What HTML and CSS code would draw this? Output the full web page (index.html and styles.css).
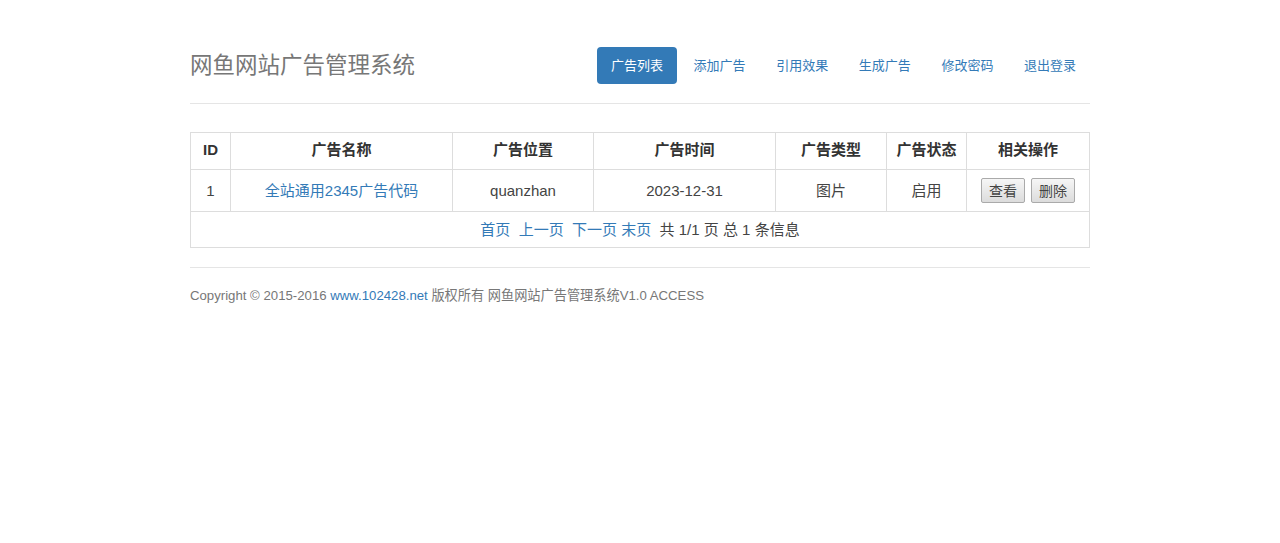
FILE: index.html
```html
<!DOCTYPE HTML>
<html>
<head>
    <meta charset="utf-8">
    <title>网鱼网站广告管理系统</title>
    <link rel="stylesheet" href="styles.css">
</head>
<body>
<div class="container">
    <div class="header">
        <h3 class="brand">网鱼网站广告管理系统</h3>
        <ul class="nav">
            <li class="active"><a href="#">广告列表</a></li>
            <li><a href="#">添加广告</a></li>
            <li><a href="#">引用效果</a></li>
            <li><a href="#">生成广告</a></li>
            <li><a href="#">修改密码</a></li>
            <li><a href="#">退出登录</a></li>
        </ul>
    </div>

    <table class="list">
        <colgroup>
            <col style="width: 40px">
            <col style="width: 222px">
            <col style="width: 141px">
            <col style="width: 182px">
            <col style="width: 111px">
            <col style="width: 80px">
            <col>
        </colgroup>
        <tr>
            <th>ID</th>
            <th>广告名称</th>
            <th>广告位置</th>
            <th>广告时间</th>
            <th>广告类型</th>
            <th>广告状态</th>
            <th>相关操作</th>
        </tr>
        <tr>
            <td>1</td>
            <td><a href="#">全站通用2345广告代码</a></td>
            <td>quanzhan</td>
            <td>2023-12-31</td>
            <td>图片</td>
            <td>启用</td>
            <td class="ops">
                <button type="button">查看</button>
                <button type="button">删除</button>
            </td>
        </tr>
        <tr>
            <td colspan="7" class="pager">
                <a href="#">首页</a>&nbsp;
                <a href="#">上一页</a>&nbsp;
                <a href="#">下一页</a>
                <a href="#">末页</a>&nbsp;
                共 1/1 页 总 1 条信息
            </td>
        </tr>
    </table>

    <div class="footer">
        Copyright &copy; 2015-2016 <a href="#">www.102428.net</a> 版权所有 网鱼网站广告管理系统V1.0 ACCESS
    </div>
</div>
</body>
</html>
```

FILE: styles.css
```css
body {
    margin: 0;
    font-family: "Liberation Sans", "Noto Sans CJK SC", sans-serif;
    font-size: 14px;
    color: #333;
    background-color: #fff;
}
a {
    color: #337ab7;
    text-decoration: none;
}
.container {
    width: 900px;
    margin: 0 auto;
}
.header {
    display: flex;
    justify-content: space-between;
    align-items: center;
    padding-top: 47px;
    padding-bottom: 19px;
    border-bottom: 1px solid #e5e5e5;
}
.brand {
    margin: 0;
    font-size: 22.5px;
    font-weight: normal;
    color: #777;
    line-height: 36px;
}
.nav {
    display: flex;
    margin: 0;
    padding: 0;
    list-style: none;
}
.nav li {
    margin-left: 2.6px;
}
.nav a {
    display: block;
    padding: 0 14px;
    font-size: 13px;
    line-height: 37px;
    border-radius: 4px;
}
.nav .active a {
    color: #fff;
    background-color: #337ab7;
}
.list {
    width: 900px;
    margin-top: 28px;
    border-collapse: collapse;
    table-layout: fixed;
}
.list th,
.list td {
    border: 1px solid #ddd;
    text-align: center;
    line-height: 20px;
}
.list th {
    padding: 7px 0 9px;
    font-size: 15px;
    font-weight: bold;
    color: #333;
}
.list td {
    padding: 8px 0;
    font-size: 15px;
    color: #444;
}
.ops button {
    font-family: "Noto Sans CJK SC", sans-serif;
    font-size: 14px;
    color: #444;
    height: 25px;
    padding: 0 7px;
    margin: 0 1px;
    line-height: 23px;
    border: 1px solid #aaa;
    border-radius: 2px;
    background: linear-gradient(#f6f6f6, #dcdcdc);
    vertical-align: middle;
}
.list td.pager {
    padding: 8px 0 7px;
}
.footer {
    margin-top: 19px;
    padding-top: 17px;
    border-top: 1px solid #e5e5e5;
    font-size: 13.2px;
    color: #777;
}
```
